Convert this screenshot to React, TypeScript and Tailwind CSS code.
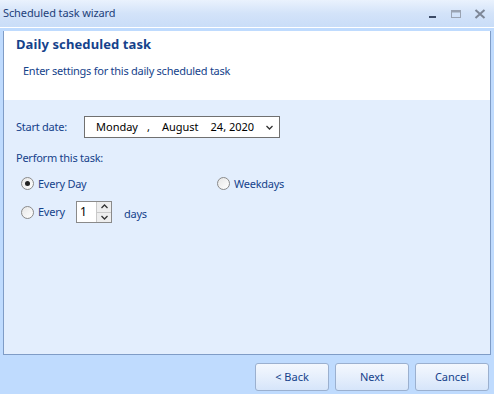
const font = "font-['Noto_Sans','DejaVu_Sans',sans-serif]";

function Radio({ checked }: { checked?: boolean }) {
  return (
    <span className="flex h-[13px] w-[13px] items-center justify-center rounded-full border border-[#8a8a8a] bg-gradient-to-br from-[#e6e6e6] to-white">
      {checked && <span className="h-[5px] w-[5px] rounded-full bg-[#222]" />}
    </span>
  );
}

function Chevron({ up }: { up?: boolean }) {
  return (
    <svg width="7" height="5" viewBox="0 0 7 5" className={up ? 'rotate-180' : ''}>
      <path d="M0.5 1 L3.5 4 L6.5 1" fill="none" stroke="#333" strokeWidth="1.3" />
    </svg>
  );
}

function WizardButton({ label }: { label: string }) {
  return (
    <button className="flex h-[28px] w-[74px] items-center justify-center rounded-[3px] border border-[#9bb0cf] bg-gradient-to-b from-[#f4f8fe] via-[#e6effc] to-[#d6e5fa] text-[11px] text-[#15428b]">
      {label}
    </button>
  );
}

export default function App() {
  return (
    <div className={`flex h-[394px] w-[494px] flex-col bg-[#bfdbfe] ${font}`}>
      {/* title bar */}
      <div className="flex h-[28px] items-center justify-between border-b border-white bg-gradient-to-b from-[#eaf2fd] via-[#d3e3f9] to-[#c9ddf8] pl-[3px] pr-[8px]">
        <span className="text-[11px] tracking-[-0.1px] text-[#1e3f79]">Scheduled task wizard</span>
        <div className="flex items-center gap-[12px]">
          <svg width="10" height="10" viewBox="0 0 10 10">
            <rect x="1" y="7" width="7" height="2" fill="#3b4a66" />
          </svg>
          <svg width="12" height="10" viewBox="0 0 12 10">
            <rect x="1.5" y="1.5" width="9" height="7" fill="none" stroke="#9aa3b2" />
            <rect x="1.5" y="1.5" width="9" height="2" fill="#9aa3b2" />
          </svg>
          <svg width="12" height="10" viewBox="0 0 12 10">
            <path d="M1.5 1 L10.5 9 M10.5 1 L1.5 9" stroke="#7d8696" strokeWidth="2" />
          </svg>
        </div>
      </div>

      {/* wizard page */}
      <div className="mx-[3px] mt-[3px] flex h-[324px] flex-col border-x border-b border-[#7f9cc6]">
        <div className="flex h-[69px] flex-col bg-white pl-[12px] pt-[4px]">
          <span className="text-[13px] font-bold tracking-[0.1px] text-[#15428b]">Daily scheduled task</span>
          <span className="mt-[8px] pl-[7px] text-[11px] tracking-[-0.25px] text-[#15428b]">
            Enter settings for this daily scheduled task
          </span>
        </div>

        <div className="flex flex-1 flex-col bg-[#e3eefd] pl-[12px] text-[11px] tracking-[-0.25px] text-[#15428b]">
          <div className="mt-[16px] flex items-center">
            <span className="w-[68px]">Start date:</span>
            <div className="flex h-[22px] w-[196px] items-center whitespace-nowrap border border-[#707070] bg-white pl-[11px] pr-[6px] text-[11px] tracking-normal text-black">
              <span>Monday</span>
              <span className="ml-[9px]">,</span>
              <span className="ml-[12px]">August</span>
              <span className="ml-[12px]">24, 2020</span>
              <span className="ml-auto">
                <Chevron />
              </span>
            </div>
          </div>

          <span className="mt-[12px]">Perform this task:</span>

          <div className="mt-[9px] flex items-center">
            <div className="flex w-[201px] items-center gap-[4px] pl-[5px]">
              <Radio checked />
              <span>Every Day</span>
            </div>
            <div className="flex items-center gap-[4px]">
              <Radio />
              <span>Weekdays</span>
            </div>
          </div>

          <div className="mt-[9px] flex items-center">
            <div className="flex w-[60px] items-center gap-[4px] pl-[5px]">
              <Radio />
              <span>Every</span>
            </div>
            <div className="flex h-[22px] w-[36px] border border-[#8a8a8a] bg-white">
              <span className="flex-1 pl-[3px] text-[12px] leading-[20px] text-black">1</span>
              <div className="flex w-[15px] flex-col border-l border-[#c9c9c9] bg-[#eeeeee]">
                <span className="flex flex-1 items-center justify-center border-b border-[#c9c9c9]">
                  <Chevron up />
                </span>
                <span className="flex flex-1 items-center justify-center">
                  <Chevron />
                </span>
              </div>
            </div>
            <span className="ml-[12px] mt-[5px]">days</span>
          </div>
        </div>
      </div>

      {/* footer buttons */}
      <div className="flex justify-end gap-[6px] pr-[5px] pt-[8px]">
        <WizardButton label="< Back" />
        <WizardButton label="Next" />
        <WizardButton label="Cancel" />
      </div>
    </div>
  );
}
